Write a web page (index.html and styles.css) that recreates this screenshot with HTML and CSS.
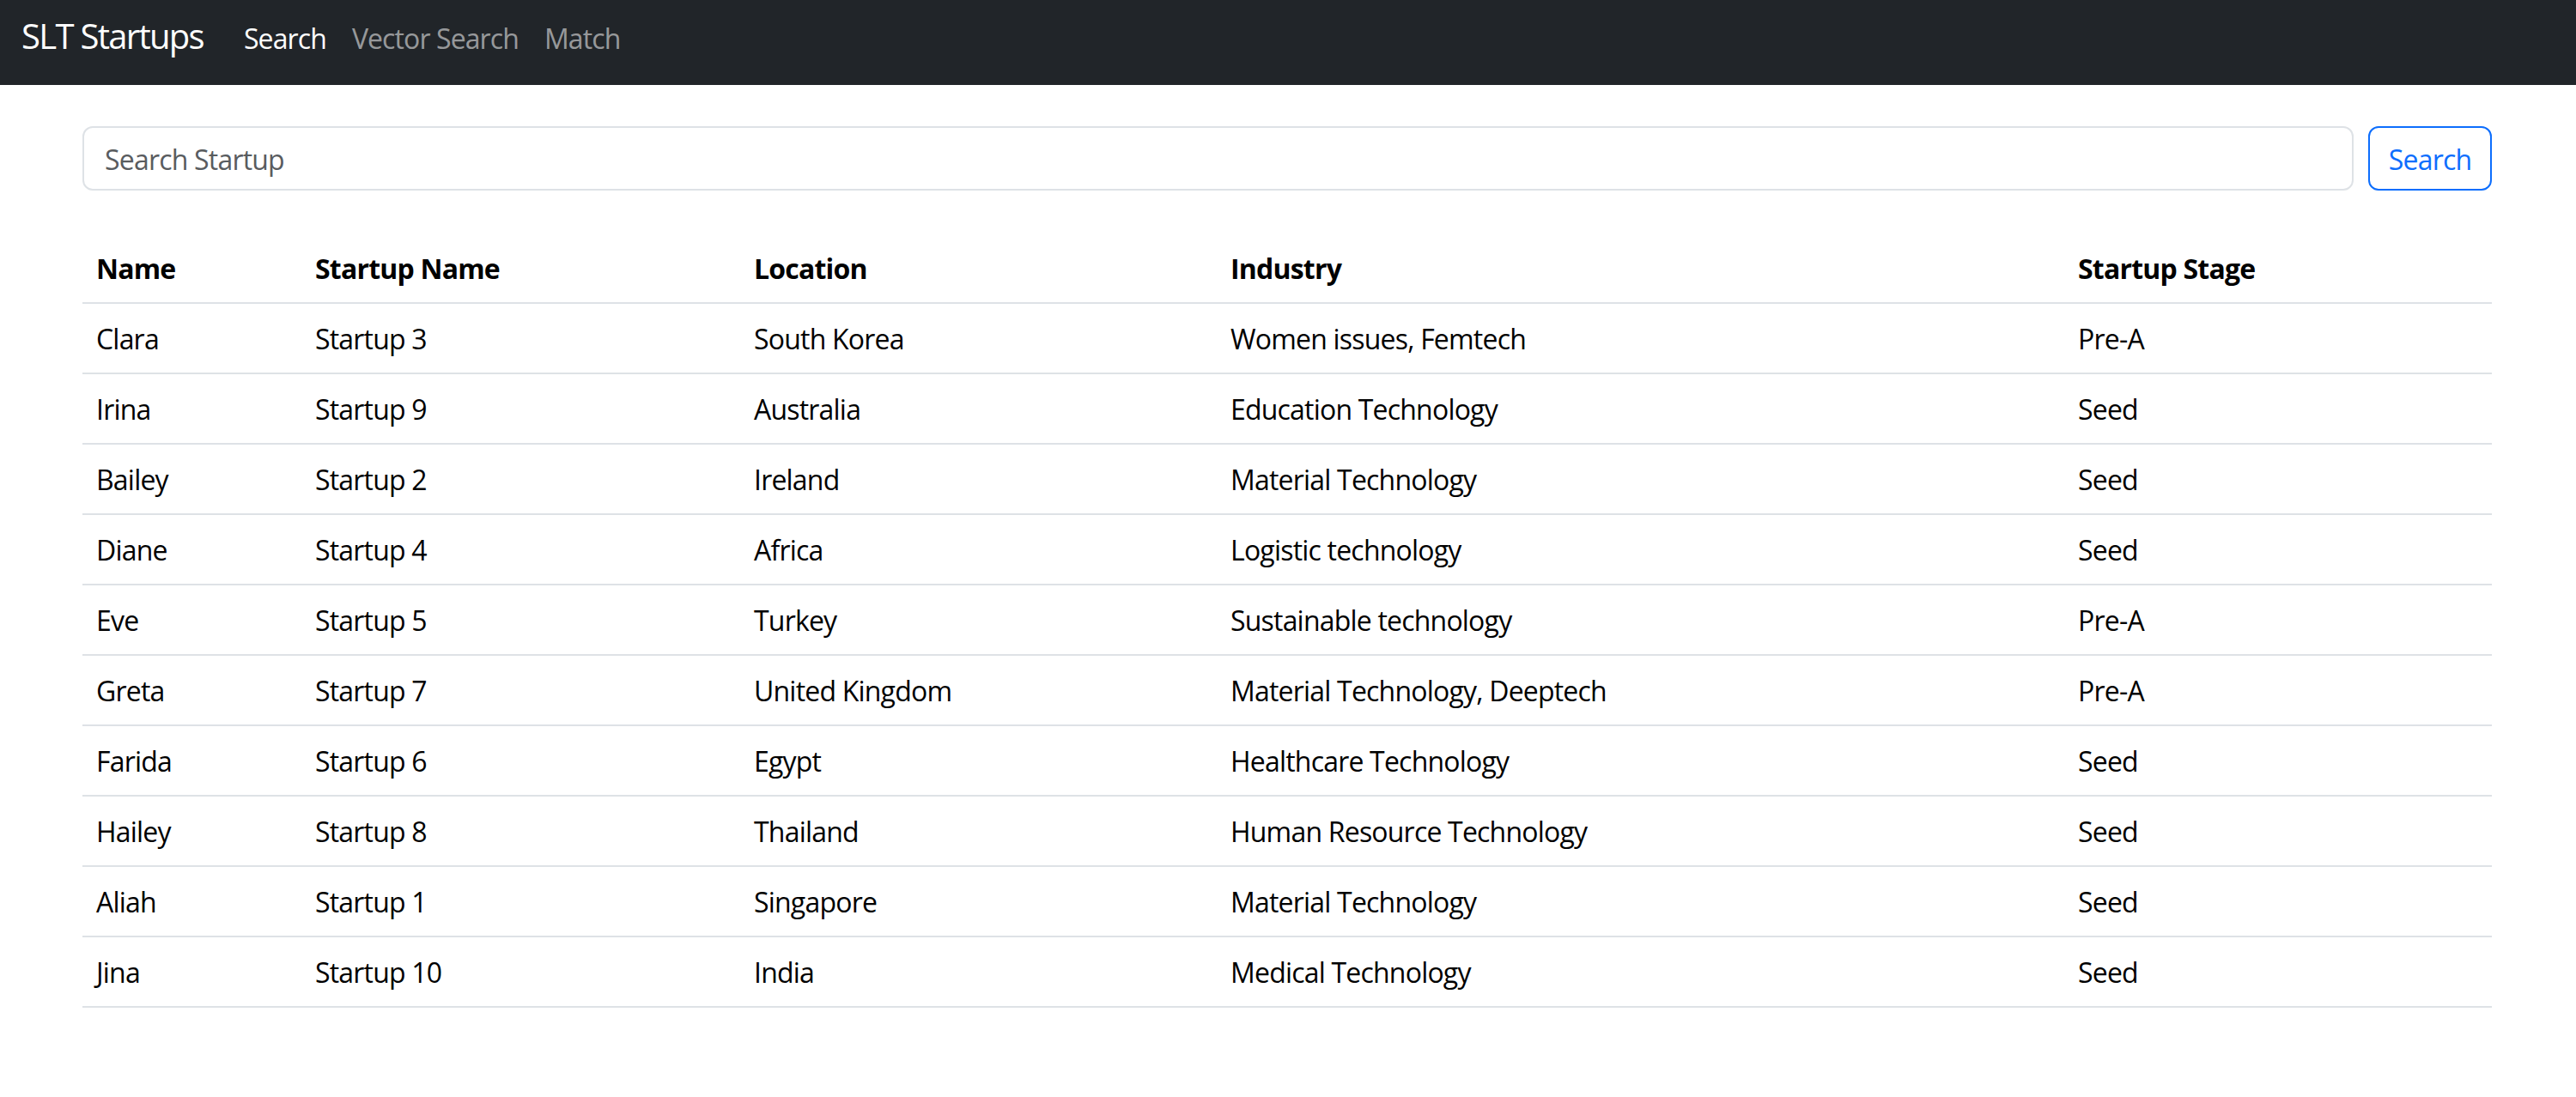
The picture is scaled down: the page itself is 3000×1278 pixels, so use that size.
FILE: index.html
```html
<!DOCTYPE html>
<html lang="en">
<head>
<meta charset="utf-8">
<title>SLT Startups</title>
<link rel="stylesheet" href="styles.css">
</head>
<body>
<nav class="navbar">
  <a class="brand" href="#">SLT Startups</a>
  <ul class="nav">
    <li><a class="nav-link active" href="#">Search</a></li>
    <li><a class="nav-link" href="#">Vector Search</a></li>
    <li><a class="nav-link" href="#">Match</a></li>
  </ul>
</nav>
<main class="container">
  <form class="search-form">
    <input class="search-input" type="text" placeholder="Search Startup">
    <button class="search-btn" type="button">Search</button>
  </form>
  <table class="table">
    <colgroup>
      <col class="c-name"><col class="c-startup"><col class="c-loc"><col class="c-ind"><col class="c-stage">
    </colgroup>
    <thead>
      <tr><th>Name</th><th>Startup Name</th><th>Location</th><th>Industry</th><th>Startup Stage</th></tr>
    </thead>
    <tbody>
      <tr><td>Clara</td><td>Startup 3</td><td>South Korea</td><td>Women issues, Femtech</td><td>Pre-A</td></tr>
      <tr><td>Irina</td><td>Startup 9</td><td>Australia</td><td>Education Technology</td><td>Seed</td></tr>
      <tr><td>Bailey</td><td>Startup 2</td><td>Ireland</td><td>Material Technology</td><td>Seed</td></tr>
      <tr><td>Diane</td><td>Startup 4</td><td>Africa</td><td>Logistic technology</td><td>Seed</td></tr>
      <tr><td>Eve</td><td>Startup 5</td><td>Turkey</td><td>Sustainable technology</td><td>Pre-A</td></tr>
      <tr><td>Greta</td><td>Startup 7</td><td>United Kingdom</td><td>Material Technology, Deeptech</td><td>Pre-A</td></tr>
      <tr><td>Farida</td><td>Startup 6</td><td>Egypt</td><td>Healthcare Technology</td><td>Seed</td></tr>
      <tr><td>Hailey</td><td>Startup 8</td><td>Thailand</td><td>Human Resource Technology</td><td>Seed</td></tr>
      <tr><td>Aliah</td><td>Startup 1</td><td>Singapore</td><td>Material Technology</td><td>Seed</td></tr>
      <tr><td>Jina</td><td>Startup 10</td><td>India</td><td>Medical Technology</td><td>Seed</td></tr>
    </tbody>
  </table>
</main>
</body>
</html>
```
FILE: styles.css
```css
* { box-sizing: border-box; }
html, body { margin: 0; padding: 0; }
body {
  font-family: "Open Sans", "Noto Sans", "Liberation Sans", sans-serif;
  font-size: 32px;
  line-height: 48px;
  color: #000;
  background: #fff;
  letter-spacing: -0.8px;
}
.navbar {
  display: flex;
  align-items: center;
  height: 99px;
  padding: 0 0 15px 25px;
  background: #212529;
}
.brand {
  font-size: 40px;
  line-height: 60px;
  color: #fff;
  text-decoration: none;
  margin-right: 32px;
  letter-spacing: -1.7px;
}
.nav {
  display: flex;
  list-style: none;
  margin: 0;
  padding: 0;
}
.nav-link {
  display: block;
  padding: 6px 15px 0;
  color: rgba(255,255,255,.55);
  text-decoration: none;
  letter-spacing: -0.9px;
}
.nav-link.active { color: #fff; }
.container {
  padding: 48px 98px 0 96px;
}
.search-form {
  display: flex;
  gap: 17px;
  margin: 0 0 50px;
}
.search-input {
  flex: 1;
  height: 75px;
  padding: 2px 24px 0;
  border: 2px solid #dee2e6;
  border-radius: 12px;
  font: inherit;
  letter-spacing: -0.8px;
  color: #212529;
  outline: none;
}
.search-input::placeholder { color: #595c5f; opacity: 1; }
.search-btn {
  height: 75px;
  width: 144px;
  padding: 2px 0 0;
  border: 2px solid #0d6efd;
  border-radius: 12px;
  background: #fff;
  color: #0d6efd;
  font: inherit;
  letter-spacing: -0.8px;
}
.table {
  width: 100%;
  border-collapse: collapse;
  table-layout: fixed;
}
.c-name { width: 255px; }
.c-startup { width: 511px; }
.c-loc { width: 555px; }
.c-ind { width: 987px; }
.c-stage { width: auto; }
.table th, .table td {
  padding: 17px 16px 15px;
  text-align: left;
  border-bottom: 2px solid #dee2e6;
  vertical-align: top;
  white-space: nowrap;
}
.table th { font-weight: 700; }
```
